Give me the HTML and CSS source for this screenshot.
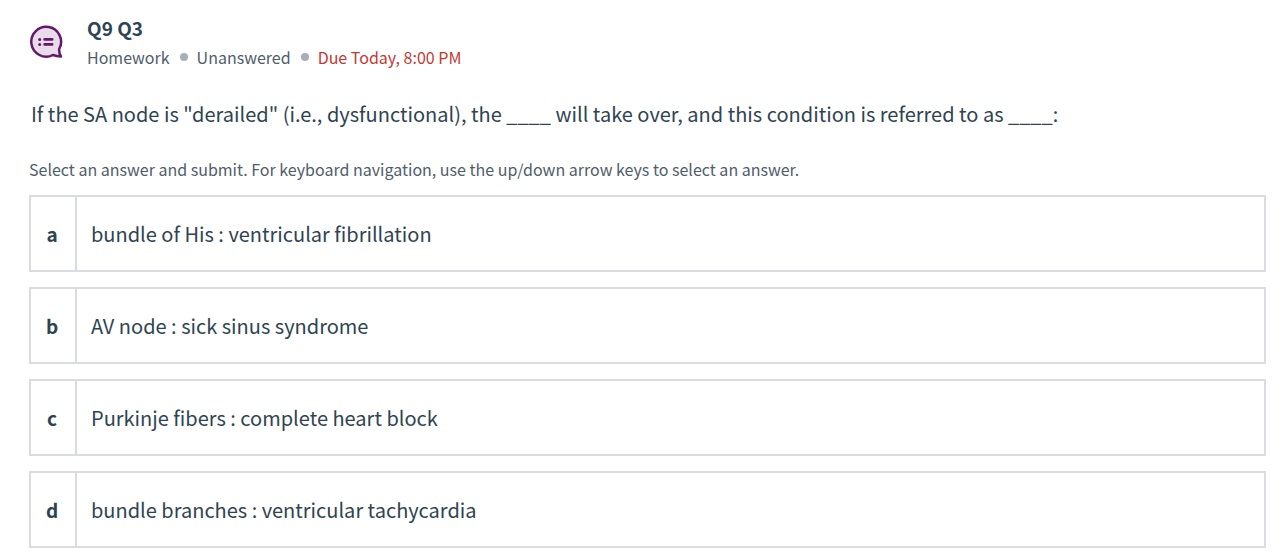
FILE: index.html
```html
<!DOCTYPE html>
<html lang="en">
<head>
    <meta charset="UTF-8">
    <meta name="viewport" content="width=device-width, initial-scale=1.0">
    <title>Q9 Q3</title>
    <link rel="stylesheet" href="styles.css">
</head>
<body>
    <header class="question-header">
        <svg class="question-icon" viewBox="0 0 34 34" aria-hidden="true">
            <path d="M30.2 24 A14.9 14.9 0 1 0 24 30 Q27.5 31.3 32 31.4 Q29.8 28.4 30.2 24 Z" fill="#e8dbea" stroke="#65186a" stroke-width="2.5" stroke-linejoin="round"/>
            <circle cx="10.7" cy="14.4" r="1.5" fill="#65186a"/>
            <circle cx="10.7" cy="19.4" r="1.5" fill="#65186a"/>
            <path d="M15.6 14.4h7.6M15.6 19.4h7.6" stroke="#65186a" stroke-width="2.6" stroke-linecap="round"/>
        </svg>
        <div>
            <h1 class="question-title">Q9 Q3</h1>
            <ul class="question-meta">
                <li>Homework</li>
                <li>Unanswered</li>
                <li class="due">Due Today, 8:00 PM</li>
            </ul>
        </div>
    </header>
    <main>
        <form>
            <p class="question-text" id="question">If the SA node is "derailed" (i.e., dysfunctional), the ____ will take over, and this condition is referred to as ____:</p>
            <p class="hint" id="hint">Select an answer and submit. For keyboard navigation, use the up/down arrow keys to select an answer.</p>
            <div class="answers" role="radiogroup" aria-labelledby="question" aria-describedby="hint">
                <label class="answer" for="answer-a">
                    <input type="radio" id="answer-a" name="answer" value="a">
                    <span class="letter">a</span>
                    <span class="answer-text">bundle of His : ventricular fibrillation</span>
                </label>
                <label class="answer" for="answer-b">
                    <input type="radio" id="answer-b" name="answer" value="b">
                    <span class="letter">b</span>
                    <span class="answer-text">AV node : sick sinus syndrome</span>
                </label>
                <label class="answer" for="answer-c">
                    <input type="radio" id="answer-c" name="answer" value="c">
                    <span class="letter">c</span>
                    <span class="answer-text">Purkinje fibers : complete heart block</span>
                </label>
                <label class="answer" for="answer-d">
                    <input type="radio" id="answer-d" name="answer" value="d">
                    <span class="letter">d</span>
                    <span class="answer-text">bundle branches : ventricular tachycardia</span>
                </label>
            </div>
        </form>
    </main>
</body>
</html>
```

FILE: styles.css
```css
* {
    box-sizing: border-box;
}

body {
    margin: 0;
    padding: 14px 18px 12px 29px;
    font-family: "Noto Sans CJK SC", "Open Sans", sans-serif;
    font-size: 20px;
    line-height: 28px;
    color: #2f4452;
    background-color: #fff;
}

.question-header {
    display: flex;
    gap: 24px;
}

.question-icon {
    width: 34px;
    height: 34px;
    margin-top: 11px;
}

.question-title {
    margin: 0;
    font-size: 19px;
    line-height: 28px;
}

.question-meta {
    display: flex;
    gap: 10px;
    margin: 0;
    padding: 0;
    list-style: none;
    font-size: 16px;
    line-height: 30px;
    color: #4f5d6b;
}

.question-meta li {
    display: flex;
    align-items: center;
    gap: 9px;
}

.question-meta li + li::before {
    content: "";
    width: 8px;
    height: 8px;
    border-radius: 50%;
    background-color: #a5afb8;
}

.question-meta .due {
    color: #c23934;
}

.question-text {
    margin: 28px 0 0 2px;
}

.hint {
    margin: 27px 0 12px;
    font-size: 16px;
    line-height: 28px;
    color: #4f5d6b;
}

.answers {
    display: flex;
    flex-direction: column;
    gap: 15px;
}

.answer {
    display: flex;
    min-height: 77px;
    border: 2px solid #d9dde1;
    cursor: pointer;
}

.answer input {
    position: absolute;
    opacity: 0;
}

.answer:hover,
.answer:focus-within {
    border-color: #65186a;
}

.letter {
    display: flex;
    align-items: center;
    justify-content: center;
    width: 46px;
    padding-right: 2px;
    border-right: 2px solid #d9dde1;
    font-size: 19px;
    font-weight: bold;
}

.answer-text {
    display: flex;
    align-items: center;
    padding: 0 14px;
}
```
